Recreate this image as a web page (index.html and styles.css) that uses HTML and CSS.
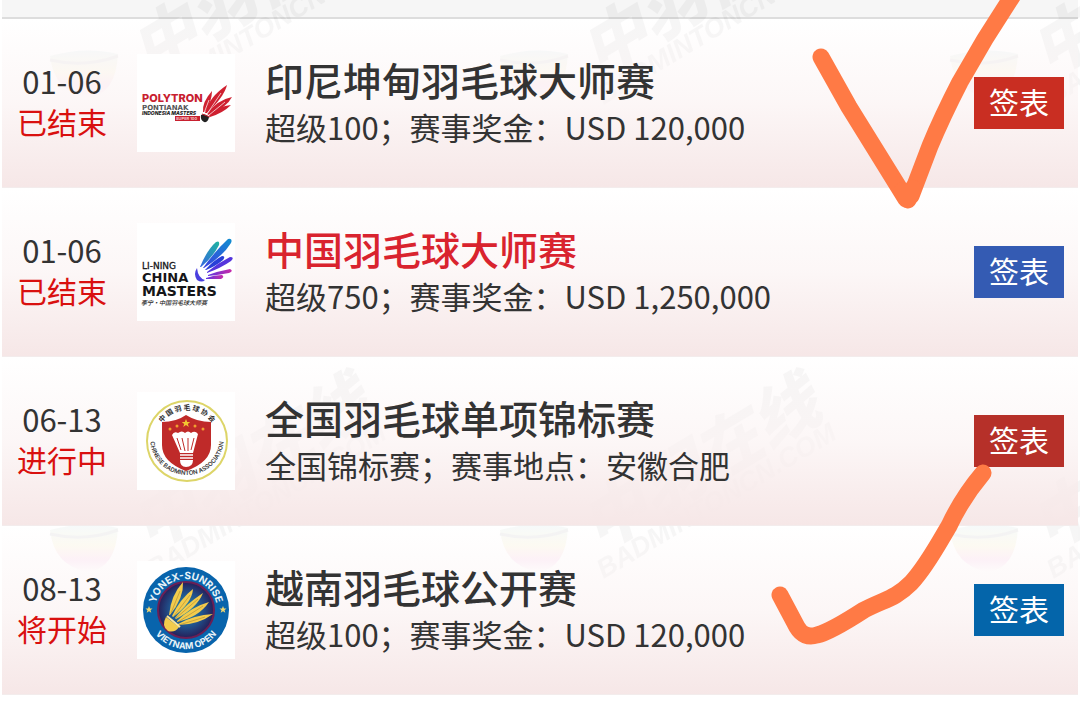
FILE: index.html
```html
<!DOCTYPE html>
<html lang="zh-CN">
<head>
    <meta charset="UTF-8">
    <meta name="viewport" content="width=device-width, initial-scale=1">
    <title>赛事日历</title>
    <link rel="stylesheet" href="styles.css">
</head>
<body>
    <div class="page">
        <!-- Tiled site watermark, shows through the rows -->
        <svg class="watermark" aria-hidden="true">
            <defs>
                <linearGradient id="ball" x1="0" y1="0" x2="0" y2="1">
                    <stop offset="0" stop-color="#d5e6ea"/>
                    <stop offset="0.45" stop-color="#f5efc4"/>
                    <stop offset="0.75" stop-color="#f5bfe2"/>
                    <stop offset="1" stop-color="#ffffff"/>
                </linearGradient>
                <pattern id="tile" width="450" height="474" patternUnits="userSpaceOnUse" y="330">
                    <g opacity="0.25">
                        <path d="M50 200 Q85 190 118 198 Q116 238 88 242 Q54 236 50 200Z" fill="url(#ball)"/>
                        <path d="M50 204 Q85 212 118 200" stroke="#cccccc" stroke-width="3" fill="none"/>
                    </g>
                    <g class="watermark-text" transform="rotate(-31 150 216)">
                        <text x="146" y="220" class="watermark-name">中羽在线</text>
                        <text x="136" y="246" class="watermark-site">BADMINTONCN.COM</text>
                    </g>
                </pattern>
            </defs>
            <rect width="100%" height="100%" fill="url(#tile)"/>
        </svg>

        <div class="topbar"></div>

        <ul class="match-list">
            <li class="match">
                <div class="match-date">
                    <time>01-06</time>
                    <span class="status">已结束</span>
                </div>
                <svg class="match-logo" viewBox="0 0 98 98" role="img" aria-label="Polytron Pontianak Indonesia Masters">
                    <text x="5" y="48" font-size="11" font-weight="800" fill="#c8202f">POLYTRON</text>
                    <text x="5" y="56" font-size="7" font-weight="700" fill="#555" class="wide">PONTIANAK</text>
                    <text x="5" y="61" font-size="5" font-weight="800" font-style="italic" fill="#222">INDONESIA MASTERS</text>
                    <rect x="38" y="62" width="25" height="5" fill="#c8202f"/>
                    <text x="39" y="66" font-size="4" font-weight="700" fill="#f5c8c8">SUPER 100</text>
                    <g fill="#cf2030">
                        <path d="M66 58 Q65 48 75 37 Q75 47 68 58Z"/>
                        <path d="M68 59 Q72 43 90 31 Q87 43 70 59Z"/>
                        <path d="M70 60 Q80 46 95 43 Q90 53 72 61Z"/>
                        <path d="M72 61 Q82 52 94 51 Q86 59 73 63Z"/>
                    </g>
                    <path d="M67 59 L72 46 M70 60 L84 39 M72 61 L88 48" stroke="#fff" stroke-width="0.7"/>
                    <path d="M64 61 Q68 59 72 63 Q71 69 67 68 Q63 66 64 61Z" fill="#222"/>
                    <path d="M65 60 L73 63" stroke="#c8202f" stroke-width="1"/>
                </svg>
                <div class="match-info">
                    <h2>印尼坤甸羽毛球大师赛</h2>
                    <p>超级100；赛事奖金：USD 120,000</p>
                </div>
                <a class="draw draw-red" href="#">签表</a>
            </li>

            <li class="match">
                <div class="match-date">
                    <time>01-06</time>
                    <span class="status">已结束</span>
                </div>
                <svg class="match-logo" viewBox="0 0 98 98" role="img" aria-label="Li-Ning China Masters">
                    <defs>
                        <linearGradient id="teal" x1="1" y1="0" x2="0" y2="1">
                            <stop offset="0" stop-color="#1fb5a0"/>
                            <stop offset="1" stop-color="#3466e0"/>
                        </linearGradient>
                        <linearGradient id="blue" x1="1" y1="0" x2="0" y2="1">
                            <stop offset="0" stop-color="#128fd0"/>
                            <stop offset="1" stop-color="#3a3fe0"/>
                        </linearGradient>
                        <linearGradient id="pink" x1="1" y1="0" x2="0" y2="0">
                            <stop offset="0" stop-color="#c92aa8"/>
                            <stop offset="1" stop-color="#5a35e0"/>
                        </linearGradient>
                    </defs>
                    <g class="wide" font-weight="700" fill="#151518">
                        <text x="5" y="46" font-size="9" font-weight="400" stroke="#151518" stroke-width="0.3">LI-NING</text>
                        <text x="5" y="59" font-size="13">CHINA</text>
                        <text x="5" y="73" font-size="14">MASTERS</text>
                    </g>
                    <text x="4" y="82" font-size="6" font-weight="500" font-style="italic" fill="#222" class="cjk">李宁·中国羽毛球大师赛</text>
                    <path d="M63 44 Q70 27 79 19 Q83 17 82 22 Q76 34 64 44Z" fill="url(#teal)"/>
                    <path d="M66 45 Q79 27 91 16 Q96 15 94 20 Q86 33 67 45Z" fill="url(#blue)"/>
                    <path d="M68 47 Q77 37 85 33 Q89 33 86 37 Q79 43 69 47Z" fill="#283fd8"/>
                    <path d="M70 49 Q81 40 93 34 Q98 34 94 38 Q84 45 70 50Z" fill="#5535dc"/>
                    <path d="M71 52 Q82 48 93 46 Q97 48 92 50 Q82 52 71 53Z" fill="url(#pink)"/>
                    <path d="M69 55 Q77 52 85 52 Q88 54 84 56 Q77 56 69 56Z" fill="url(#pink)"/>
                    <path d="M60 45 Q56 51 60 57 Q65 60 68 57 Q61 55 60 45Z" fill="#4a3fdf"/>
                </svg>
                <div class="match-info">
                    <h2 class="highlight">中国羽毛球大师赛</h2>
                    <p>超级750；赛事奖金：USD 1,250,000</p>
                </div>
                <a class="draw draw-indigo" href="#">签表</a>
            </li>

            <li class="match">
                <div class="match-date">
                    <time>06-13</time>
                    <span class="status">进行中</span>
                </div>
                <svg class="match-logo" viewBox="0 0 98 98" role="img" aria-label="中国羽毛球协会">
                    <defs>
                        <path id="cbaTop" d="M19 49 A31 31 0 0 1 81 49"/>
                        <path id="cbaBottom" d="M13 46 A37 37 0 0 0 87 46"/>
                    </defs>
                    <circle cx="50" cy="49" r="40" fill="#fff" stroke="#ddd568" stroke-width="2"/>
                    <text font-size="7" font-weight="700" fill="#333" class="cjk" text-anchor="middle"><textPath href="#cbaTop" startOffset="50%">中 国 羽 毛 球 协 会</textPath></text>
                    <text font-size="6" font-weight="600" fill="#333" text-anchor="middle"><textPath href="#cbaBottom" startOffset="50%">CHINESE BADMINTON ASSOCIATION</textPath></text>
                    <path d="M25 30 Q39 30 49 23 Q60 30 74 30 V53 Q74 70 49 79 Q25 70 25 53Z" fill="#bf2a29"/>
                    <path d="M49 27 l1.200 3 h3 l-2.400 2 l1 3 l-2.800 -2 l-2.800 2 l1 -3 l-2.400 -2 h3Z" fill="#f2c832"/>
                    <g fill="#f0a030">
                        <circle cx="33" cy="37" r="1.500"/>
                        <circle cx="40" cy="34" r="1.500"/>
                        <circle cx="58" cy="34" r="1.500"/>
                        <circle cx="66" cy="37" r="1.500"/>
                    </g>
                    <path d="M35 43 Q37 39 41 41 Q45 38 48 41 Q51 38 54 41 Q58 38 61 42 L56 61 H43Z" fill="#fff"/>
                    <path d="M40 46 L44 58 M45 46 L48 59 M51 46 V59 M57 46 L54 58" stroke="#bf2a29" stroke-width="1"/>
                    <path d="M43 63 H56 M43 66 H56" stroke="#fff" stroke-width="1.500"/>
                    <path d="M43 68 H56 Q56 75 49 75 Q43 75 43 68Z" fill="#fff"/>
                </svg>
                <div class="match-info">
                    <h2>全国羽毛球单项锦标赛</h2>
                    <p>全国锦标赛；赛事地点：安徽合肥</p>
                </div>
                <a class="draw draw-brick" href="#">签表</a>
            </li>

            <li class="match">
                <div class="match-date">
                    <time>08-13</time>
                    <span class="status">将开始</span>
                </div>
                <svg class="match-logo" viewBox="0 0 98 98" role="img" aria-label="Yonex-Sunrise Vietnam Open">
                    <defs>
                        <radialGradient id="court">
                            <stop offset="0" stop-color="#2a93a6"/>
                            <stop offset="0.6" stop-color="#20518c"/>
                            <stop offset="1" stop-color="#251f58"/>
                        </radialGradient>
                        <path id="voTop" d="M18 49 A31 31 0 0 1 80 49"/>
                        <path id="voBottom" d="M10 49 A39 39 0 0 0 88 49"/>
                    </defs>
                    <circle cx="49" cy="49" r="43" fill="#0864ac"/>
                    <circle cx="49" cy="49" r="28" fill="url(#court)" stroke="#6b1f55" stroke-width="2"/>
                    <g font-weight="700" fill="#e8f3f8" text-anchor="middle">
                        <text font-size="10"><textPath href="#voTop" startOffset="50%">YONEX-SUNRISE</textPath></text>
                        <text font-size="9"><textPath href="#voBottom" startOffset="50%">VIETNAM OPEN</textPath></text>
                    </g>
                    <path id="star" d="M12 45 l1 2.500 h2.500 l-2 1.700 l0.800 2.500 l-2.300 -1.500 l-2.300 1.500 l0.800 -2.500 l-2 -1.700 h2.500Z" fill="#f0d670"/>
                    <use href="#star" x="74"/>
                    <g fill="#f3cb4c">
                        <path d="M32 54 Q34 34 46 21 Q47 37 33 54Z"/>
                        <path d="M35 55 Q43 38 56 28 Q55 42 36 56Z"/>
                        <path d="M38 57 Q49 43 66 32 Q60 47 39 58Z"/>
                        <path d="M40 60 Q54 46 72 41 Q62 56 40 61Z"/>
                        <path d="M41 63 Q57 54 76 53 Q61 64 41 64Z"/>
                        <path d="M29 56 L42 66 Q38 72 31 70 Q24 65 29 56Z"/>
                    </g>
                    <path d="M30 55 L43 66" stroke="#fbe79a" stroke-width="2"/>
                    <path d="M34 52 L43 30 M37 55 L53 34 M39 57 L61 38 M41 61 L66 45 M42 64 L68 56" stroke="#a98a38" stroke-width="0.600"/>
                </svg>
                <div class="match-info">
                    <h2>越南羽毛球公开赛</h2>
                    <p>超级100；赛事奖金：USD 120,000</p>
                </div>
                <a class="draw draw-blue" href="#">签表</a>
            </li>
        </ul>

        <!-- Hand-drawn ticks over the list -->
        <svg class="ticks" width="320" height="709" viewBox="760 0 320 709" aria-hidden="true">
            <path d="M821 57 L849 107 L880 157 L906 199 L911 196 L930 146 Q942 117 960 82 L985 39 L1015 -8"/>
            <path d="M902 191 L908 200 L913 188"/>
            <path d="M780 595 L797 627 Q804 639 817 635 Q830 632 864 610 C885 599 895 599 911 583 C927 566 941 539 949 526 Q962 498 983 473"/>
        </svg>
    </div>
</body>
</html>
```
FILE: styles.css
```css
body {
    margin: 0;
    background: #fff;
    color: #333;
    font-family: "Noto Sans CJK SC", sans-serif;
}

.page {
    position: relative;
    min-height: 100vh;
    padding: 0 2px;
    box-sizing: border-box;
    overflow: hidden;
}

.watermark {
    position: absolute;
    top: 0;
    left: 0;
    width: 100%;
    height: 100%;
}

.watermark-text {
    fill: #000;
    opacity: 0.04;
    font-weight: 900;
    font-style: italic;
}

.watermark-name {
    font-size: 66px;
}

.watermark-site {
    font-family: "Liberation Sans", sans-serif;
    font-size: 27px;
}

.topbar {
    height: 17px;
    background: rgba(240, 240, 240, 0.6);
    border-bottom: 2px solid #ddd;
}

.match-list {
    position: relative;
    margin: 0;
    padding: 0;
    list-style: none;
}

.match {
    display: flex;
    align-items: center;
    padding: 35px 14px 35px 0;
    border-bottom: 1px solid #f3ecec;
    background: linear-gradient(rgba(255, 255, 255, 0.1), rgba(251, 243, 243, 0.7) 50%, #f6e7e7);
}

.match-date {
    width: 120px;
    margin-right: 15px;
    padding-bottom: 4px;
    text-align: center;
    flex-shrink: 0;
}

.match-date time,
.status {
    display: block;
    font-size: 31px;
    line-height: 41px;
}

.status {
    color: #d9100f;
    font-size: 30px;
}

.match-logo {
    width: 98px;
    height: 98px;
    flex-shrink: 0;
    background: #fff;
    font-family: Inter, sans-serif;
}

.wide {
    font-family: "DejaVu Sans", sans-serif;
}

.cjk {
    font-family: "Noto Sans CJK SC", sans-serif;
}

.match-info {
    flex: 1;
    padding-left: 30px;
}

.match-info h2 {
    margin: 0;
    font-size: 39px;
    font-weight: 500;
    line-height: 48px;
}

.match-info .highlight {
    color: #d9232e;
}

.match-info p {
    margin: 0;
    font-size: 31px;
    line-height: 48px;
}

.draw {
    padding: 0 15px 4px;
    color: #fff;
    font-size: 30px;
    line-height: 48px;
    text-decoration: none;
}

.draw-red {
    background: #c92e22;
}

.draw-indigo {
    background: #345bb3;
}

.draw-brick {
    background: #b63029;
}

.draw-blue {
    background: #0465aa;
}

.ticks {
    position: absolute;
    top: 0;
    right: 0;
    fill: none;
    stroke: #ff7a45;
    stroke-width: 17px;
    stroke-linecap: round;
    stroke-linejoin: round;
    pointer-events: none;
}
```
